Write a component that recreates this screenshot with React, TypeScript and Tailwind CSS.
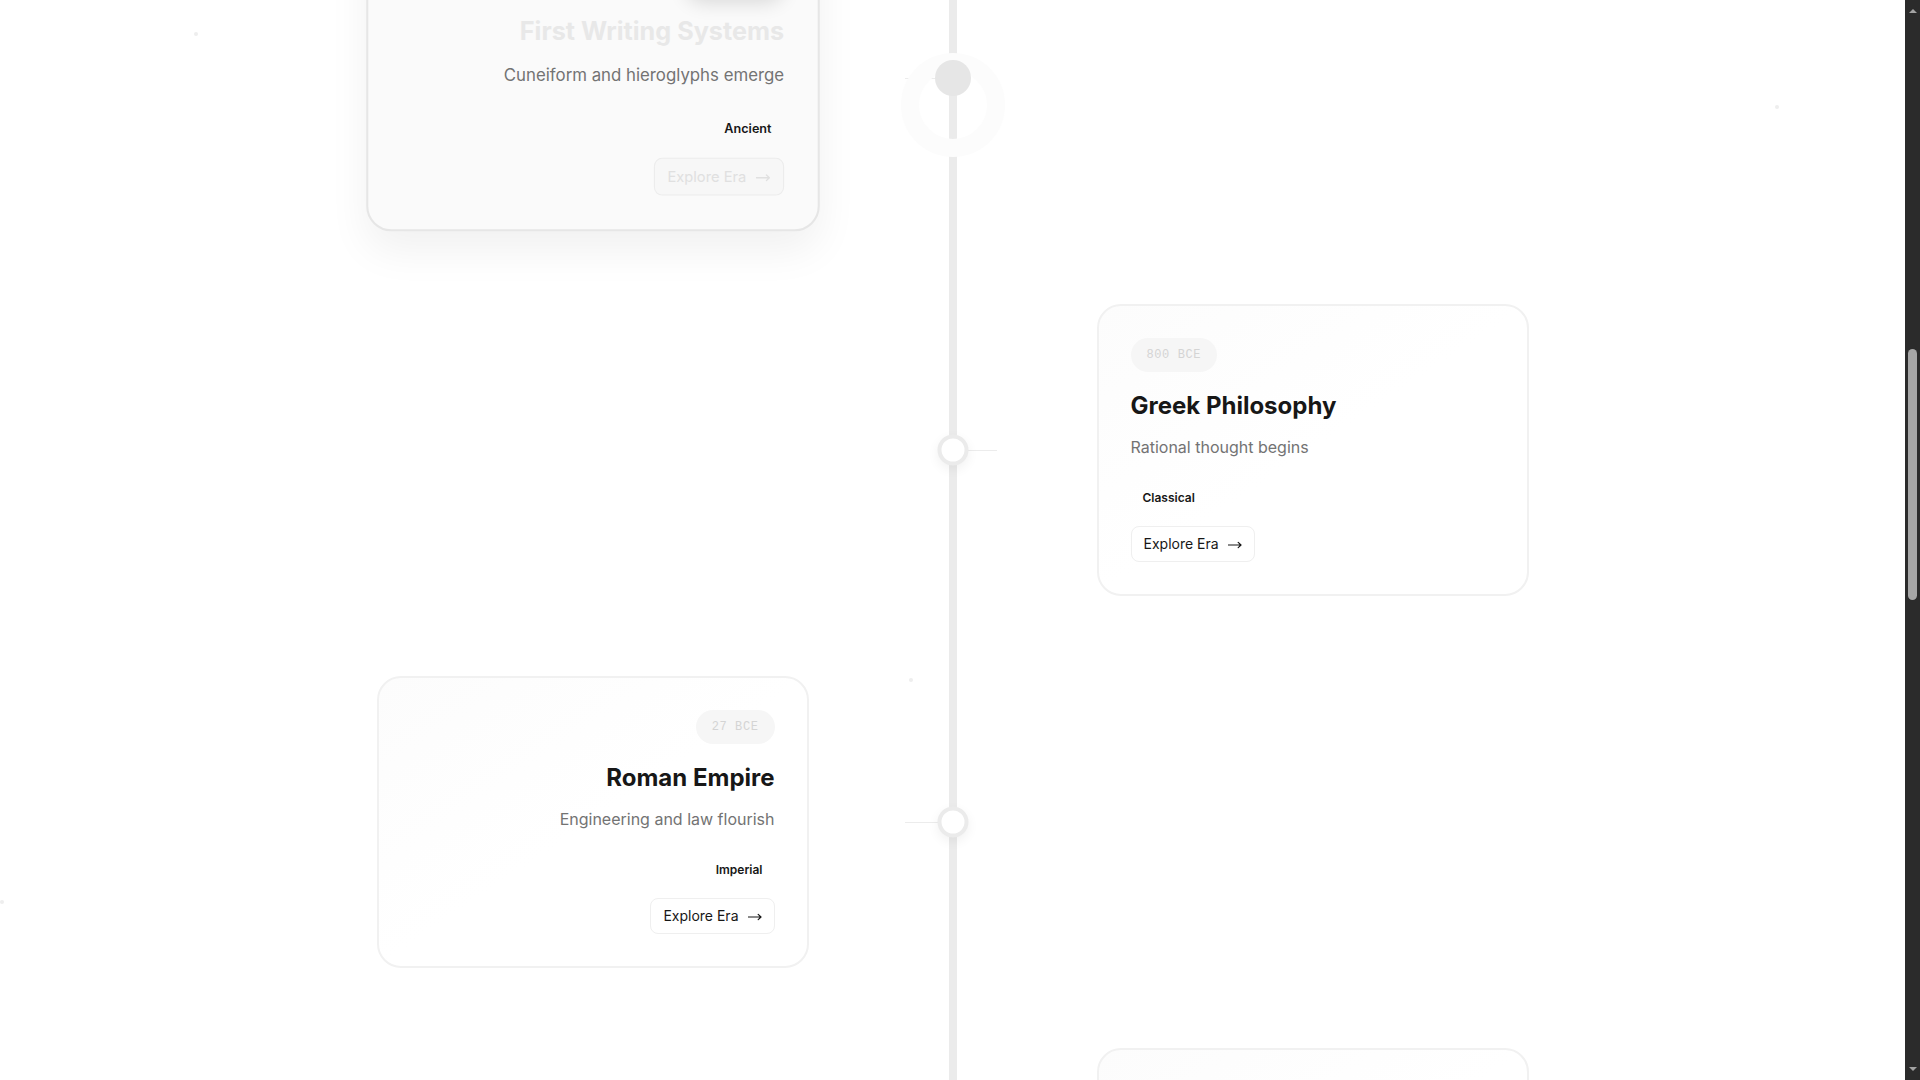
import { useLayoutEffect, useRef } from 'react';

type Era = {
  date: string;
  title: string;
  desc: string;
  tag: string;
  active?: boolean;
};

const eras: Era[] = [
  { date: '10,000 BCE', title: 'Agricultural Revolution', desc: 'Farming transforms human societies', tag: 'Prehistoric' },
  { date: '3300 BCE', title: 'Bronze Age', desc: 'Metal tools reshape trade and war', tag: 'Ancient' },
  { date: '3200 BCE', title: 'First Writing Systems', desc: 'Cuneiform and hieroglyphs emerge', tag: 'Ancient', active: true },
  { date: '800 BCE', title: 'Greek Philosophy', desc: 'Rational thought begins', tag: 'Classical' },
  { date: '27 BCE', title: 'Roman Empire', desc: 'Engineering and law flourish', tag: 'Imperial' },
  { date: '800 CE', title: 'Islamic Golden Age', desc: 'Science and mathematics advance', tag: 'Medieval' },
  { date: '1440 CE', title: 'Printing Press', desc: 'Knowledge spreads across Europe', tag: 'Renaissance' },
  { date: '1760 CE', title: 'Industrial Revolution', desc: 'Machines change how we work', tag: 'Modern' },
  { date: '1969 CE', title: 'Moon Landing', desc: 'Humanity reaches another world', tag: 'Space Age' },
  { date: '1991 CE', title: 'World Wide Web', desc: 'The information age arrives', tag: 'Digital' }
];

const particles = [
  'left-[194px] top-[32px]',
  'left-[1775px] top-[105px]',
  'left-[909px] top-[678px]',
  'left-[0px] top-[900px]'
];

function Arrow() {
  return (
    <svg width="14" height="8" viewBox="0 0 14 8" fill="none" stroke="currentColor" strokeWidth="1.2" className="mt-px">
      <path d="M0.5 4h12.5M10.2 1.4 13 4l-2.8 2.6" strokeLinecap="round" strokeLinejoin="round" />
    </svg>
  );
}

function EraCard({ era, alignRight }: { era: Era; alignRight: boolean }) {
  const active = era.active;
  return (
    <div
      className={
        'flex w-full flex-col rounded-3xl border-2 p-8 ' +
        (alignRight ? 'items-end text-right ' : 'items-start text-left ') +
        (active
          ? 'scale-105 border-[#e6e6e6] bg-[#fafafa] shadow-[0_18px_40px_rgba(0,0,0,0.06)]'
          : 'border-[#f1f1f1] bg-linear-to-br from-[#fcfcfc] via-white to-white')
      }
    >
      <span
        className={
          'rounded-full px-4 py-[9px] font-mono text-xs tracking-wider ' +
          (active ? 'bg-white text-[#d6d6d6] shadow-[0_6px_18px_rgba(0,0,0,0.14)]' : 'bg-[#f6f6f6] text-[#d4d4d4]')
        }
      >
        {era.date}
      </span>
      <h3 className={'mt-[18px] text-2xl font-bold ' + (active ? 'text-[#e8e8e8]' : 'text-neutral-900')}>
        {era.title}
      </h3>
      <p className="mt-[13px] text-base text-neutral-500">{era.desc}</p>
      <span className="mt-[27px] px-3 py-1 text-xs font-semibold text-neutral-900">{era.tag}</span>
      <button
        type="button"
        className={
          'mt-4 inline-flex items-center gap-[9px] rounded-lg border px-3 py-[7px] text-sm ' +
          (active ? 'border-[#ececec] bg-[#f7f7f7] text-[#e0e0e0]' : 'border-[#efefef] bg-white text-neutral-900')
        }
      >
        Explore Era
        <Arrow />
      </button>
    </div>
  );
}

function TimelineRow({ era, index }: { era: Era; index: number }) {
  const onLeft = index % 2 === 0;
  return (
    <div className="relative flex h-[372px] items-center">
      <div className="w-1/2 pr-36">{onLeft && <EraCard era={era} alignRight />}</div>
      <div className="w-1/2 pl-36">{!onLeft && <EraCard era={era} alignRight={false} />}</div>

      {onLeft ? (
        <div className="absolute top-1/2 right-1/2 h-px w-12 bg-[#ececec]" />
      ) : (
        <div className="absolute top-1/2 left-1/2 h-px w-11 bg-[#ececec]" />
      )}

      {era.active && (
        <div className="absolute top-1/2 left-1/2 mt-[27px] h-[104px] w-[104px] -translate-x-1/2 -translate-y-1/2 rounded-full border-[18px] border-[#fcfcfc]" />
      )}
      {era.active ? (
        <div className="absolute top-1/2 left-1/2 h-9 w-9 -translate-x-1/2 -translate-y-1/2 rounded-full bg-[#e6e6e6]" />
      ) : (
        <div className="absolute top-1/2 left-1/2 h-[31px] w-[31px] -translate-x-1/2 -translate-y-1/2 rounded-full border-4 border-[#ebebeb] bg-white shadow-[0_4px_12px_rgba(0,0,0,0.06)]" />
      )}
    </div>
  );
}

function ScrollTrack() {
  return (
    <aside className="flex w-[15px] shrink-0 flex-col items-center bg-[#2b2b2b]">
      <span className="mt-[9px] h-0 w-0 border-x-4 border-b-4 border-x-transparent border-b-[#a3a3a3]" />
      <div className="mt-[336px] h-[251px] w-[9px] rounded-full bg-[#a6a6a6]" />
      <span className="mt-auto mb-[9px] h-0 w-0 border-x-4 border-t-4 border-x-transparent border-t-[#a3a3a3]" />
    </aside>
  );
}

export default function App() {
  const scroller = useRef<HTMLDivElement>(null);

  useLayoutEffect(() => {
    if (scroller.current) scroller.current.scrollTop = 1437;
  }, []);

  return (
    <div className="flex h-screen overflow-hidden bg-white font-['Inter',sans-serif] text-neutral-900">
      <div className="relative min-w-0 flex-1">
        <div ref={scroller} className="h-full overflow-y-scroll">
          <header className="flex h-[585px] flex-col items-center justify-center gap-4">
            <p className="font-mono text-xs tracking-[0.3em] text-neutral-400 uppercase">A brief history</p>
            <h1 className="text-6xl font-bold">Journey Through Time</h1>
            <p className="text-lg text-neutral-500">Key moments that shaped human civilization</p>
          </header>

          <div className="relative mx-auto max-w-6xl">
            <div className="absolute inset-y-0 left-1/2 w-2 -translate-x-1/2 bg-[#ebebeb]" />
            {eras.map((era, i) => (
              <TimelineRow key={era.title} era={era} index={i} />
            ))}
          </div>

          <footer className="flex h-[213px] items-center justify-center text-sm text-neutral-400">
            The story continues…
          </footer>
        </div>

        <div className="pointer-events-none absolute inset-0">
          {particles.map((p) => (
            <span key={p} className={'absolute h-1 w-1 rounded-full bg-[#eeeeee] ' + p} />
          ))}
        </div>
      </div>
      <ScrollTrack />
    </div>
  );
}
